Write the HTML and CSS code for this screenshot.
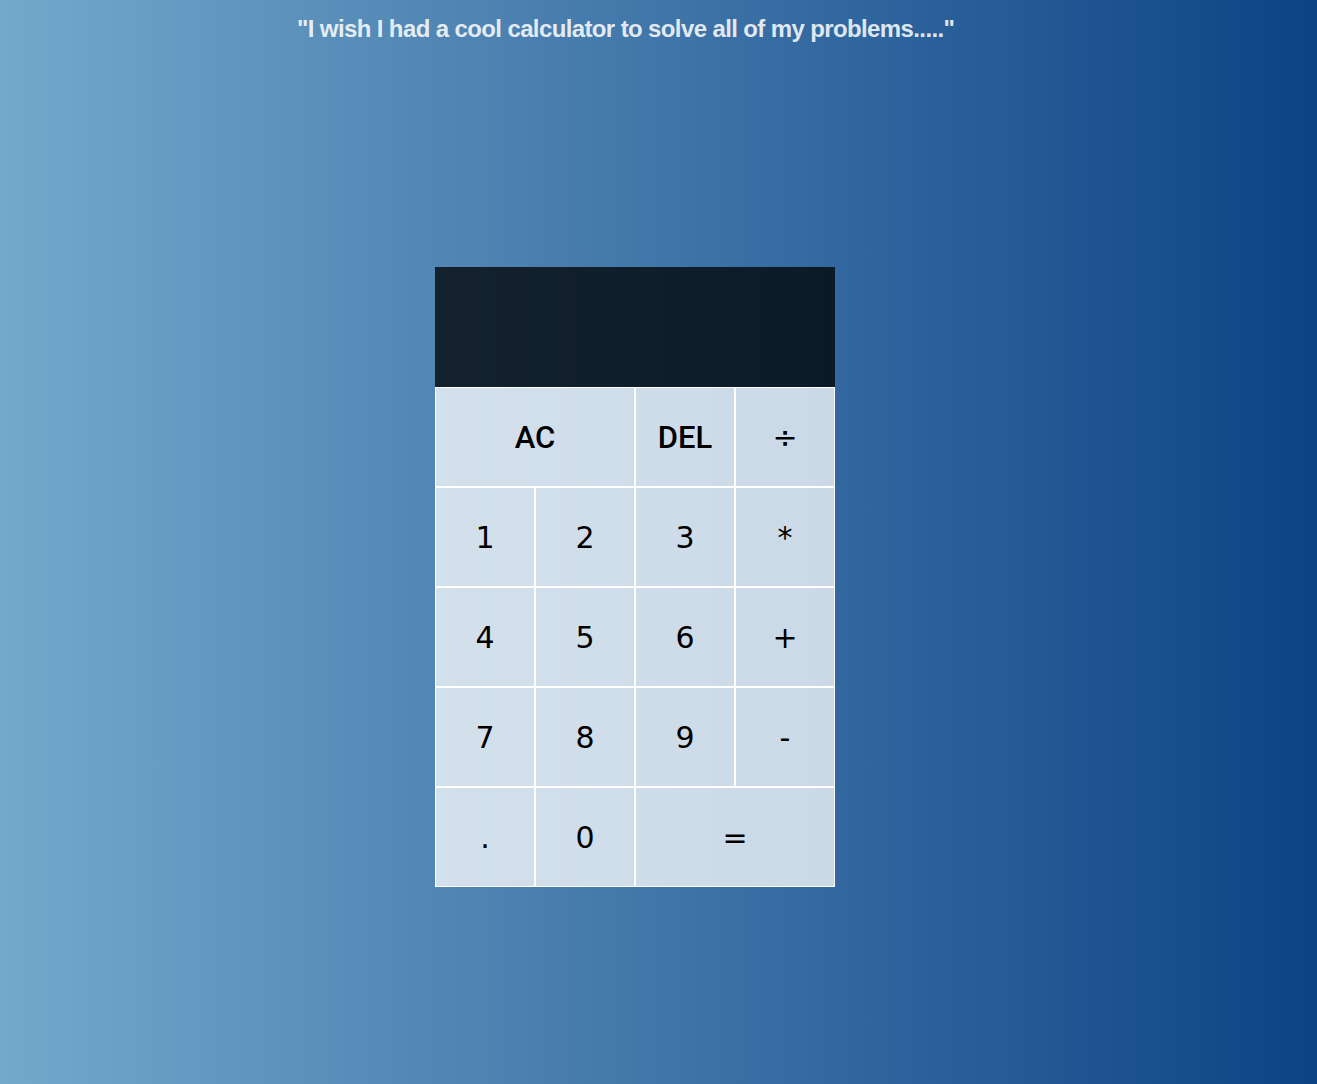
FILE: index.html
```html
<!DOCTYPE html>
<html>
<head>
<meta charset="utf-8">
<title>Calculator</title>
<link rel="stylesheet" href="styles.css">
</head>
<body>
<h1 class="title">"I wish I had a cool calculator to solve all of my problems....."</h1>
<div class="calculator">
  <div class="output"></div>
  <button class="key span-two word">AC</button>
  <button class="key word">DEL</button>
  <button class="key">÷</button>
  <button class="key">1</button>
  <button class="key">2</button>
  <button class="key">3</button>
  <button class="key">*</button>
  <button class="key">4</button>
  <button class="key">5</button>
  <button class="key">6</button>
  <button class="key">+</button>
  <button class="key">7</button>
  <button class="key">8</button>
  <button class="key">9</button>
  <button class="key">-</button>
  <button class="key">.</button>
  <button class="key">0</button>
  <button class="key span-two">=</button>
</div>
</body>
</html>
```
FILE: styles.css
```css
html, body {
  margin: 0;
  padding: 0;
}
body {
  min-height: 100vh;
  background: linear-gradient(to right, #74a8cc, #0c4385);
  font-family: "Liberation Sans", Arial, sans-serif;
}
.title {
  margin: 0;
  padding: 14px 0 0 297px;
  height: 30px;
  line-height: 30px;
  font-family: "Liberation Sans", Arial, sans-serif;
  font-size: 24px;
  font-weight: bold;
  letter-spacing: -0.62px;
  color: rgba(255, 255, 255, 0.86);
  white-space: nowrap;
}
.calculator {
  display: grid;
  grid-template-columns: repeat(4, 100px);
  grid-template-rows: 120px repeat(5, 100px);
  margin: 223px 0 0 435px;
  width: 400px;
}
.output {
  grid-column: 1 / -1;
  background: rgba(0, 0, 0, 0.75);
}
.key {
  box-sizing: border-box;
  margin: 0;
  padding: 0;
  border: 1px solid #fff;
  outline: none;
  background: rgba(255, 255, 255, 0.75);
  color: #000;
  font-family: "DejaVu Sans", sans-serif;
  font-size: 30px;
  cursor: pointer;
}
.key.word {
  font-family: Roboto, sans-serif;
  font-size: 31px;
  font-weight: 500;
}
.span-two {
  grid-column: span 2;
}
```
